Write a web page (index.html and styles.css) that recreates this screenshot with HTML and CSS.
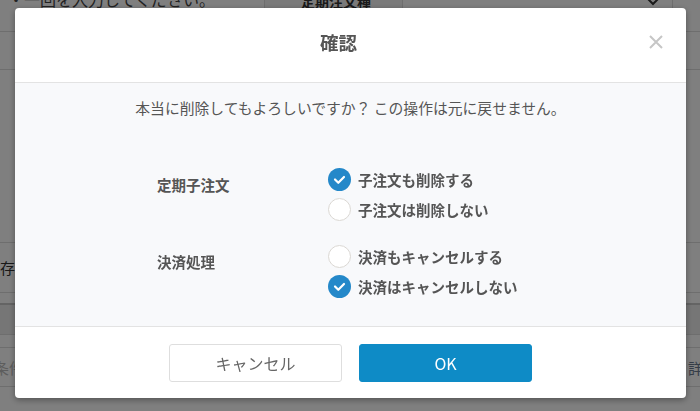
FILE: index.html
```html
<!DOCTYPE html>
<html lang="ja">
<head>
<meta charset="utf-8">
<title>確認</title>
<link rel="stylesheet" href="styles.css">
</head>
<body>
<div class="page">
  <div class="row row-a">
    <div class="cell cell-note"><span class="note">・一回を入力してください。</span></div>
    <div class="cell cell-head">定期注文種</div>
    <div class="cell cell-select"><svg class="chev" width="14" height="9" viewBox="0 0 14 9"><polyline points="1,1 7,7 13,1" fill="none" stroke="#333" stroke-width="2"/></svg></div>
    <div class="cell cell-end"></div>
  </div>
  <div class="row row-b"></div>
  <div class="row row-c"></div>
  <div class="row row-d"><span class="frag frag-left">保存</span></div>
  <div class="row row-e"></div>
  <div class="row row-f"></div>
  <div class="row row-g"></div>
  <div class="row row-h"><span class="frag frag-faint">条件</span><span class="frag frag-right">詳細</span></div>
  <div class="row row-i"></div>
</div>

<div class="overlay"></div>

<div class="modal" role="dialog">
  <div class="modal-header">
    <h2 class="modal-title">確認</h2>
    <button class="modal-close" aria-label="閉じる">
      <svg width="14" height="14" viewBox="0 0 14 14"><path d="M1 1 L13 13 M13 1 L1 13" stroke="#c6c6c6" stroke-width="2" fill="none"/></svg>
    </button>
  </div>
  <div class="modal-body">
    <p class="message">本当に削除してもよろしいですか？ この操作は元に戻せません。</p>
    <div class="form">
      <div class="label">定期子注文</div>
      <div class="options">
        <div class="option"><span class="radio checked"><svg width="23" height="23" viewBox="0 0 23 23"><polyline points="7,11.5 10.3,14.8 16,9" fill="none" stroke="#fff" stroke-width="2.2" stroke-linecap="round" stroke-linejoin="round"/></svg></span><span class="opt-text">子注文も削除する</span></div>
        <div class="option"><span class="radio"></span><span class="opt-text">子注文は削除しない</span></div>
      </div>
      <div class="label">決済処理</div>
      <div class="options">
        <div class="option"><span class="radio"></span><span class="opt-text">決済もキャンセルする</span></div>
        <div class="option"><span class="radio checked"><svg width="23" height="23" viewBox="0 0 23 23"><polyline points="7,11.5 10.3,14.8 16,9" fill="none" stroke="#fff" stroke-width="2.2" stroke-linecap="round" stroke-linejoin="round"/></svg></span><span class="opt-text">決済はキャンセルしない</span></div>
      </div>
    </div>
  </div>
  <div class="modal-footer">
    <button class="btn btn-cancel">キャンセル</button>
    <button class="btn btn-ok">OK</button>
  </div>
</div>
</body>
</html>
```

FILE: styles.css
```css
* { box-sizing: border-box; }
html, body { margin: 0; padding: 0; }
body {
  width: 700px;
  height: 411px;
  overflow: hidden;
  background: #fff;
  font-family: "Noto Sans CJK JP", "Noto Sans", sans-serif;
  color: #555;
}

/* underlying page */
.page { width: 700px; }
.row { border-bottom: 1px solid #dcdcdc; position: relative; }
.row-a { height: 32px; display: flex; }
.row-b { height: 38px; }
.row-c { height: 173px; }
.row-d { height: 50px; display: flex; align-items: center; }
.row-e { height: 12px; border-bottom: 2px solid #c8c8c8; }
.row-f { height: 30px; background: #ececec; }
.row-g { height: 13px; }
.row-h { height: 39px; display: flex; align-items: center; justify-content: space-between; }
.row-i { height: 30px; border-bottom: none; }
.cell { height: 100%; }
.cell-note { width: 265px; border-right: 1px solid #dcdcdc; overflow: hidden; }
.note { display: block; margin-top: -11px; padding-left: 8px; font-size: 16px; line-height: 20px; color: #444; white-space: nowrap; }
.cell-head { width: 138px; border-right: 1px solid #dcdcdc; font-weight: 700; font-size: 14px; line-height: 14px; margin-top: -6px; padding-left: 36px; color: #333; background: #f4f4f4; }
.cell-select { width: 270px; border-right: 1px solid #dcdcdc; display: flex; justify-content: flex-end; padding-right: 12px; }
.chev { margin-top: -3px; }
.cell-end { flex: 1; }
.frag { font-size: 15px; white-space: nowrap; }
.frag-left { margin-left: -15px; color: #333; }
.frag-faint { margin-left: -6px; color: #bbb; }
.frag-right { margin-right: -18px; color: #6a7a90; }

/* overlay */
.overlay {
  position: fixed;
  inset: 0;
  background: rgba(0, 0, 0, 0.5);
}

/* modal */
.modal {
  position: fixed;
  left: 15px;
  top: 8px;
  width: 671px;
  background: #fff;
  border-radius: 4px;
  box-shadow: 0 2px 6px rgba(0, 0, 0, 0.35);
  overflow: hidden;
  display: flex;
  flex-direction: column;
}
.modal-header {
  height: 75px;
  padding-bottom: 7px;
  border-bottom: 1px solid #e3e3e3;
  display: flex;
  align-items: center;
  position: relative;
}
.modal-title {
  flex: 1;
  margin: 0;
  padding-right: 24px;
  text-align: center;
  font-size: 18.5px;
  line-height: 24px;
  font-weight: 700;
  color: #555;
}
.modal-close {
  position: absolute;
  right: 23px;
  top: 27px;
  width: 14px;
  height: 14px;
  padding: 0;
  border: 0;
  background: none;
  display: flex;
}
.modal-body {
  background: #f8f9fb;
  padding: 15px 0 28px;
  border-bottom: 1px solid #e3e3e3;
}
.message {
  margin: 0;
  text-align: center;
  font-size: 14.8px;
  line-height: 20px;
  color: #555;
}
.form {
  margin-top: 50px;
  padding-left: 142px;
  display: grid;
  grid-template-columns: 171px 1fr;
  row-gap: 24px;
}
.label {
  font-size: 14.5px;
  font-weight: 700;
  line-height: 23px;
  padding-top: 5px;
  color: #555;
}
.options { display: flex; flex-direction: column; gap: 7px; }
.option { display: flex; align-items: center; gap: 7px; height: 23px; }
.radio {
  width: 23px;
  height: 23px;
  border-radius: 50%;
  background: #fff;
  border: 1.5px solid #dad7d3;
  flex: none;
  display: flex;
}
.radio.checked { background: #2488c9; border: none; }
.opt-text { font-size: 14.5px; font-weight: 700; line-height: 23px; color: #555; }

.modal-footer {
  padding: 17px 0 16px;
  display: flex;
  justify-content: center;
  gap: 17px;
}
.btn {
  width: 173px;
  height: 38px;
  border-radius: 3px;
  font-family: "Noto Sans CJK JP", "Noto Sans", sans-serif;
  font-size: 16px;
  line-height: 20px;
  cursor: pointer;
}
.btn-cancel { background: #fff; border: 1px solid #dedede; color: #666; }
.btn-ok { background: #0e8bc6; border: 1px solid #0e8bc6; color: #fff; }
```
